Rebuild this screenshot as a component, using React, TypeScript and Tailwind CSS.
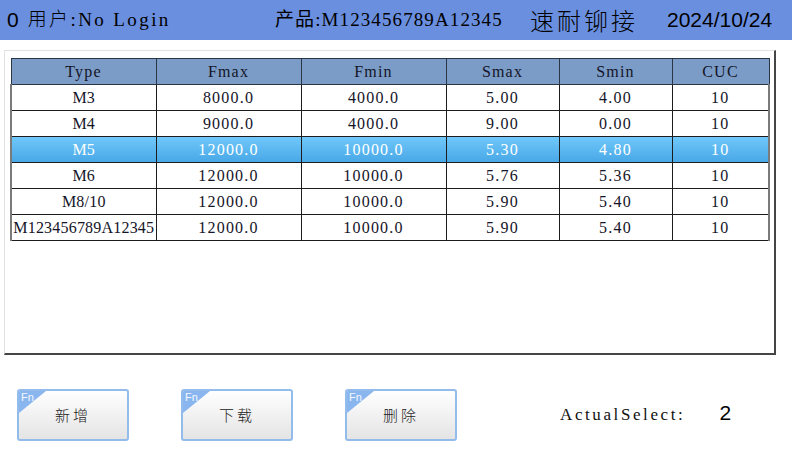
import React from 'react';

interface Row {
  type: string;
  fmax: string;
  fmin: string;
  smax: string;
  smin: string;
  cuc: string;
}

const ROWS: Row[] = [
  { type: 'M3', fmax: '8000.0', fmin: '4000.0', smax: '5.00', smin: '4.00', cuc: '10' },
  { type: 'M4', fmax: '9000.0', fmin: '4000.0', smax: '9.00', smin: '0.00', cuc: '10' },
  { type: 'M5', fmax: '12000.0', fmin: '10000.0', smax: '5.30', smin: '4.80', cuc: '10' },
  { type: 'M6', fmax: '12000.0', fmin: '10000.0', smax: '5.76', smin: '5.36', cuc: '10' },
  { type: 'M8/10', fmax: '12000.0', fmin: '10000.0', smax: '5.90', smin: '5.40', cuc: '10' },
  { type: 'M123456789A12345', fmax: '12000.0', fmin: '10000.0', smax: '5.90', smin: '5.40', cuc: '10' },
];

const SELECTED = 2;

// SimSun-like look: thin serif latin, cjk fallback
const SERIF = "font-['Liberation_Serif','Noto_Sans_CJK_SC',serif]";
const SANS = "font-['Liberation_Sans','Noto_Sans_CJK_SC',sans-serif]";

function FnButton({ label }: { label: string }) {
  return (
    <div className="relative w-[112px] h-[52px] rounded-[3px] border-2 border-[#93bbec] bg-gradient-to-b from-white to-[#e4e4e4] flex items-center justify-center overflow-hidden">
      <svg className="absolute left-0 top-0" width="27" height="22" viewBox="0 0 27 22">
        <polygon points="0,0 27,0 0,22" fill="#8ab6ef" />
      </svg>
      <span className={`absolute left-[2px] top-[0px] leading-[12px] text-[11px] text-white/90 ${SANS}`}>Fn</span>
      <span className="text-[15px] tracking-[3px] text-[#222] font-['Noto_Sans_CJK_SC',sans-serif] font-light mt-[1px]">
        {label}
      </span>
    </div>
  );
}

export default function App() {
  const cell = 'border border-[#1c1c1c] text-center h-[26px] p-0';

  return (
    <div className="w-[792px] h-[475px] bg-white overflow-hidden">
      {/* header */}
      <div className="h-[40px] bg-[#6a8fdf] flex items-center text-black">
        <div className="w-[275px] pl-[7px] flex items-center">
          <span className={`text-[21px] ${SANS}`}>0</span>
          <span className={`ml-[9px] text-[19px] tracking-[2.4px] font-light ${SERIF}`}>用户:No Login</span>
        </div>
        <div className={`w-[255px] text-[19px] tracking-[1.1px] ${SERIF}`}>产品:M123456789A12345</div>
        <div className="w-[137px] text-[24px] tracking-[3px] font-['Noto_Sans_CJK_SC',sans-serif] font-light">
          速耐铆接
        </div>
        <div className={`text-[21px] ${SANS}`}>2024/10/24</div>
      </div>

      {/* table panel */}
      <div className="ml-[4px] mt-[10px] w-[772px] h-[305px] border-t border-l border-[#e2e2e2] border-r-2 border-b-2 border-r-[#454545] border-b-[#454545] pl-[5px] pt-[7px]">
        <table className={`w-[758px] border-collapse table-fixed text-[16px] tracking-[1.2px] text-[#141428] ${SERIF}`}>
          <colgroup>
            <col className="w-[145px]" />
            <col className="w-[145px]" />
            <col className="w-[145px]" />
            <col className="w-[113px]" />
            <col className="w-[113px]" />
            <col className="w-[97px]" />
          </colgroup>
          <thead>
            <tr className="bg-[#7b9cc6]">
              {['Type', 'Fmax', 'Fmin', 'Smax', 'Smin', 'CUC'].map((h) => (
                <th key={h} className="border border-[#2a3644] text-center font-normal h-[26px] p-0">
                  {h}
                </th>
              ))}
            </tr>
          </thead>
          <tbody>
            {ROWS.map((r, i) => {
              const sel = i === SELECTED;
              return (
                <tr
                  key={r.type}
                  className={sel ? 'bg-gradient-to-b from-[#70c8fa] to-[#46a6e6] text-white' : 'bg-white'}
                >
                  <td className={`${cell} border-l-2 border-l-[#7a7a7a] whitespace-nowrap tracking-[0.2px]`}>
                    {r.type}
                  </td>
                  <td className={cell}>{r.fmax}</td>
                  <td className={cell}>{r.fmin}</td>
                  <td className={cell}>{r.smax}</td>
                  <td className={cell}>{r.smin}</td>
                  <td className={`${cell} border-r-2 border-r-[#7a7a7a]`}>{r.cuc}</td>
                </tr>
              );
            })}
          </tbody>
        </table>
      </div>

      {/* bottom bar */}
      <div className="mt-[34px] pl-[17px] flex items-center">
        <div className="flex gap-[52px]">
          <FnButton label="新增" />
          <FnButton label="下载" />
          <FnButton label="删除" />
        </div>
        <span className={`ml-[103px] text-[17px] tracking-[2.6px] text-[#111] ${SERIF}`}>ActualSelect:</span>
        <span className={`ml-[34px] -mt-[5px] text-[21px] text-black ${SANS}`}>2</span>
      </div>
    </div>
  );
}
